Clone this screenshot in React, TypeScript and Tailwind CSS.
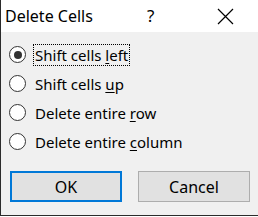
import React from "react";

function Radio({ checked }: { checked?: boolean }) {
  return (
    <span className="flex h-[17px] w-[17px] shrink-0 items-center justify-center rounded-full border border-[#333333] bg-white">
      {checked && <span className="h-[8px] w-[8px] rounded-full bg-[#333333]" />}
    </span>
  );
}

function Row({ pre, u, post, checked, focus }: { pre: string; u: string; post: string; checked?: boolean; focus?: boolean }) {
  return (
    <div className="flex h-[29px] items-center gap-[7px]">
      <Radio checked={checked} />
      <span className={`px-[1px] leading-[20px] ${focus ? "border border-dotted border-black" : "border border-transparent"}`}>
        {pre}
        <span className="underline underline-offset-2">{u}</span>
        {post}
      </span>
    </div>
  );
}

export default function App() {
  return (
    <div
      className="flex h-[217px] w-[258px] flex-col bg-white text-[#000]"
      style={{ fontFamily: '"Noto Sans", "Open Sans", sans-serif' }}
    >
      <div className="flex h-[216px] flex-col border-b border-l border-[#2b2b2b]">
        <div className="flex h-[32px] items-center bg-white pl-[4px] text-[16px]">
          <span className="w-[142px]">Delete Cells</span>
          <span className="w-[62px] text-[17px]">?</span>
          <svg width="17" height="17" viewBox="0 0 17 17" className="ml-[8px]">
            <path d="M1 1 L16 16 M16 1 L1 16" stroke="#000" strokeWidth="1.2" fill="none" />
          </svg>
        </div>
        <div className="flex flex-1 flex-col bg-[#f0f0f0] text-[15px]">
          <div className="flex flex-col pl-[8px] pt-[8px]">
            <Row pre="Shift cells " u="l" post="eft" checked focus />
            <Row pre="Shift cells " u="u" post="p" />
            <Row pre="Delete entire " u="r" post="ow" />
            <Row pre="Delete entire " u="c" post="olumn" />
          </div>
          <div className="mt-[15px] flex gap-[16px] pl-[9px]">
            <button className="h-[31px] w-[112px] border-2 border-[#0078d7] bg-[#e1e1e1] text-[16px]">OK</button>
            <button className="h-[31px] w-[112px] border border-[#adadad] bg-[#e1e1e1] text-[16px]">Cancel</button>
          </div>
        </div>
      </div>
    </div>
  );
}
